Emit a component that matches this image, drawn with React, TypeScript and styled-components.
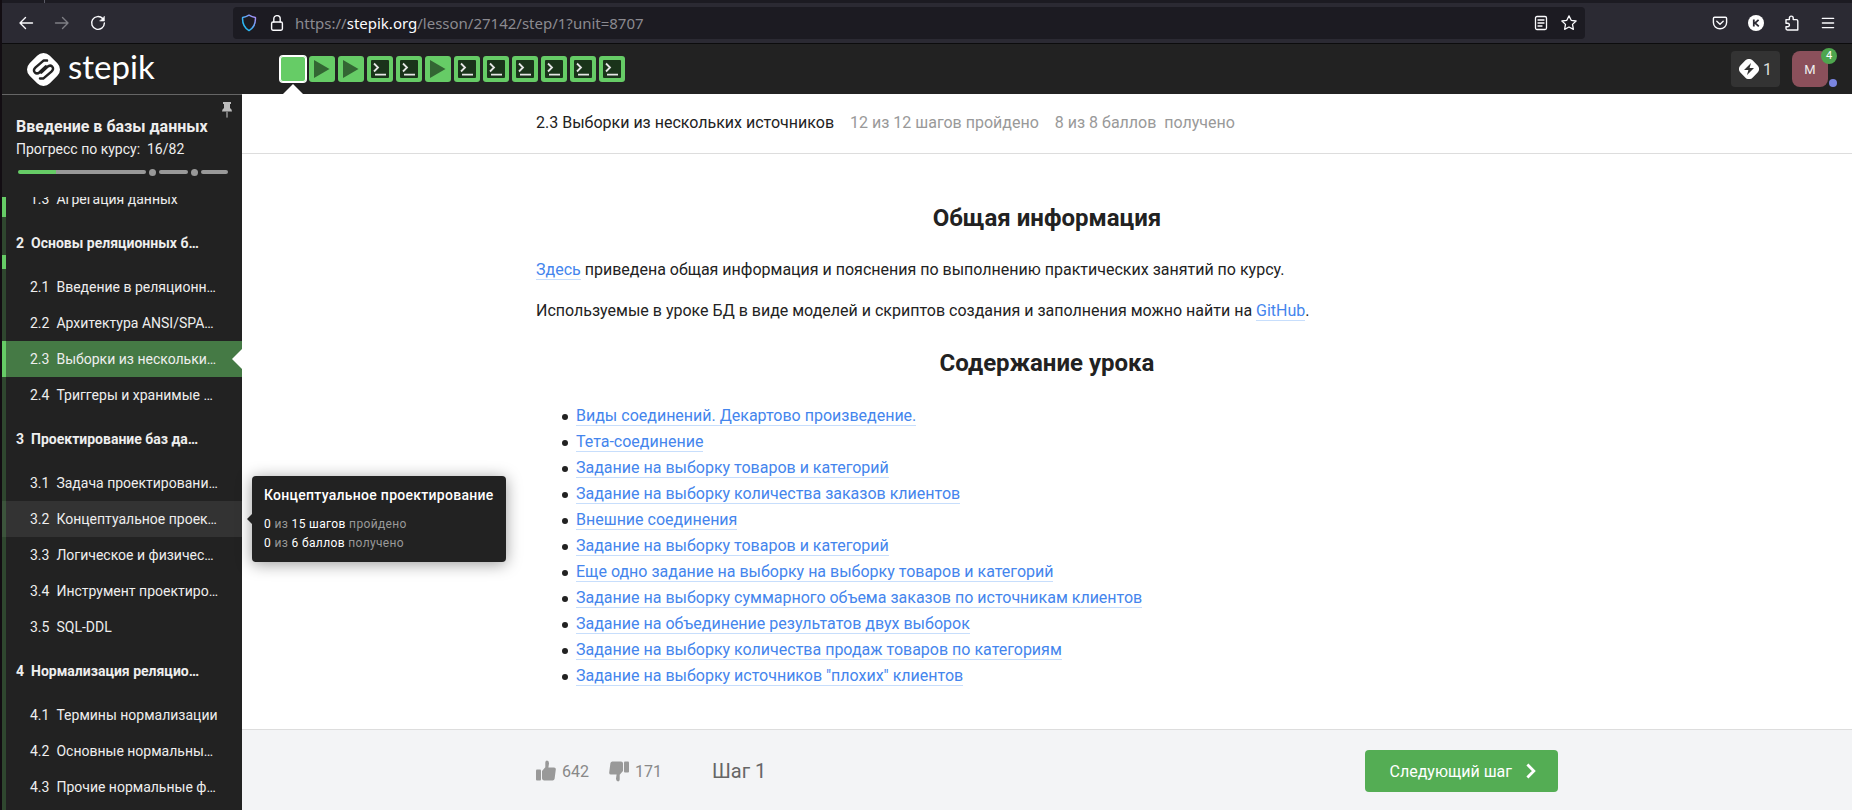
import React from 'react';
import styled, { createGlobalStyle, css } from 'styled-components';

const GlobalStyle = createGlobalStyle`
  *, *::before, *::after { box-sizing: border-box; }
  body { margin: 0; background: #fff; font-family: Roboto, "Noto Sans", sans-serif; color: #222; }
  button { font: inherit; border: 0; padding: 0; background: none; color: inherit; cursor: pointer; }
  a { text-decoration: none; color: inherit; }
  svg { display: block; flex: none; }
`;

/* ---------- browser window ---------- */

const Window = styled.div`
  display: flex;
  flex-direction: column;
  height: 100vh;
  overflow: hidden;
  border-left: 2px solid #120d12;
`;

const TabStrip = styled.div`
  flex: none;
  height: 3px;
  padding-left: 42px;
  background: #1c1b22;
  &::before { content: ''; display: block; width: 1px; height: 3px; background: #5b5b66; }
`;

const Toolbar = styled.div`
  flex: none;
  display: flex;
  align-items: center;
  height: 41px;
  padding: 0 14px 0 14px;
  background: #2b2a33;
  border-bottom: 1px solid #0c0c0d;
  color: #fbfbfe;
`;

const ToolbarGroup = styled.div<{ $end?: boolean }>`
  display: flex;
  gap: 16px;
  ${p => p.$end && css`margin-left: 125px;`}
`;

const IconButton = styled.button<{ $dim?: boolean }>`
  display: grid;
  place-items: center;
  width: 20px;
  height: 20px;
  opacity: ${p => (p.$dim ? 0.4 : 1)};
`;

const AddressBar = styled.div`
  flex: 1;
  display: flex;
  align-items: center;
  gap: 8px;
  height: 32px;
  margin-left: 125px;
  padding: 0 6px;
  border-radius: 4px;
  background: #1c1b22;
`;

const Address = styled.div`
  flex: 1;
  font: 15px/20px "Noto Sans", sans-serif;
  color: #8b8a90;
  b { font-weight: 400; color: #fbfbfe; }
`;

/* ---------- site header ---------- */

const Header = styled.header`
  flex: none;
  display: flex;
  align-items: center;
  height: 50px;
  padding: 0 24px 0 25px;
  background: #222;
`;

const Logo = styled.a`
  display: flex;
  align-items: center;
  gap: 8px;
  width: 253px;
  color: #fff;
  font: 33px/40px Lato, sans-serif;
  span { margin-top: -6px; }
`;

const Steps = styled.nav`
  display: flex;
  gap: 3px;
`;

const Step = styled.a<{ $active?: boolean }>`
  position: relative;
  display: grid;
  place-items: center;
  width: 26px;
  height: 26px;
  border-radius: 3px;
  background: #66cc66;
  ${p => p.$active && css`
    box-shadow: 0 0 0 1px #fff, inset 0 0 0 1px #fff;
    &::after {
      content: '';
      position: absolute;
      top: 28px;
      left: 3px;
      border: 10px solid transparent;
      border-top: 0;
      border-bottom-color: #fff;
    }
  `}
`;

const HeaderEnd = styled.div`
  display: flex;
  gap: 12px;
  margin-left: auto;
`;

const Knowledge = styled.button`
  display: flex;
  align-items: center;
  gap: 4px;
  height: 36px;
  padding: 0 8px;
  border-radius: 4px;
  background: #333;
  color: #ddd;
  font-size: 16px;
`;

const Avatar = styled.button`
  position: relative;
  width: 36px;
  height: 36px;
  border-radius: 8px;
  background: #8b505b;
  color: #eee;
  font-size: 13px;
`;

const Badge = styled.span`
  position: absolute;
  top: -3px;
  right: -9px;
  width: 16px;
  height: 16px;
  border-radius: 50%;
  background: #4ea64e;
  color: #fff;
  font-size: 11px;
  line-height: 16px;
`;

const Dot = styled.span`
  position: absolute;
  right: -9px;
  bottom: 0;
  width: 8px;
  height: 8px;
  border-radius: 50%;
  background: #7a85e0;
`;

/* ---------- sidebar ---------- */

const Body = styled.div`
  flex: 1;
  display: flex;
  min-height: 0;
`;

const Sidebar = styled.aside`
  position: relative;
  flex: none;
  display: flex;
  flex-direction: column;
  width: 240px;
  border-top: 1px solid #666;
  background: #222;
  color: #eee;
`;

const CourseInfo = styled.div`
  flex: none;
  height: 102px;
  padding: 21px 14px 0;
`;

const CourseTitle = styled.a`
  display: block;
  font-size: 16px;
  font-weight: 700;
  line-height: 22px;
  white-space: nowrap;
`;

const CourseProgress = styled.div`
  font-size: 14px;
  line-height: 22px;
  white-space: pre;
`;

const Pin = styled.button`
  position: absolute;
  top: 6px;
  right: 9px;
`;

const ProgressLine = styled.div`
  display: flex;
  align-items: center;
  gap: 3px;
  height: 8px;
  margin: 8px 0 0 2px;
`;

const Segment = styled.i<{ $length: number; $done?: number }>`
  flex: 0 0 ${p => p.$length}px;
  height: 4px;
  border-radius: 2px;
  background: linear-gradient(to right, #66cc66 ${p => p.$done || 0}px, #999 ${p => p.$done || 0}px);
`;

const Mark = styled.i`
  flex: none;
  width: 7px;
  height: 7px;
  border-radius: 50%;
  background: #999;
`;

const Outline = styled.nav`
  flex: 1;
  min-height: 0;
  overflow: hidden;
  background: linear-gradient(#2f472f, #2f472f) left / 4px 100% no-repeat;
`;

const OutlineList = styled.ul`
  list-style: none;
  margin: -16px 0 0;
  padding: 0;
`;

type RowState = 'done' | 'active' | 'hover' | 'tail' | undefined;

const strip = (state: RowState) =>
  state === 'done' || state === 'active'
    ? '#66cc66, #66cc66'
    : state === 'tail'
    ? '#2f472f 38px, #66cc66 38px'
    : state === 'hover'
    ? '#3c543c, #3c543c'
    : '#2f472f, #2f472f';

const Row = styled.a<{ $chapter?: boolean; $state?: RowState }>`
  position: relative;
  display: flex;
  align-items: center;
  gap: 7px;
  height: ${p => (p.$chapter ? 52 : 36)}px;
  padding-left: ${p => (p.$chapter ? 14 : 28)}px;
  font-size: 14px;
  font-weight: ${p => (p.$chapter ? 700 : 400)};
  white-space: nowrap;
  background: linear-gradient(${p => strip(p.$state)}) left / 4px 100% no-repeat
    ${p => (p.$state === 'active' ? '#457a45' : p.$state === 'hover' ? '#333' : '#222')};
  ${p => p.$state === 'active' && css`
    &::after {
      content: '';
      position: absolute;
      right: 0;
      top: 8px;
      border: 10px solid transparent;
      border-left: 0;
      border-right-color: #fff;
    }
  `}
`;

const Tooltip = styled.div`
  position: absolute;
  left: 250px;
  top: 381px;
  z-index: 2;
  padding: 10px 12px 9px;
  border-radius: 4px;
  background: #222;
  color: #fff;
  box-shadow: 0 2px 16px rgba(0, 0, 0, 0.4);
  font-size: 12px;
  line-height: 19px;
  letter-spacing: 0.03em;
  white-space: nowrap;
  &::before {
    content: '';
    position: absolute;
    left: -5px;
    top: 38px;
    border: 5px solid transparent;
    border-left: 0;
    border-right-color: #222;
  }
  span { color: #999; }
  p { margin: 0; }
`;

const TooltipTitle = styled.p`
  && { margin-bottom: 10px; }
  font-size: 14px;
  font-weight: 500;
  letter-spacing: 0.02em;
`;

/* ---------- lesson ---------- */

const Main = styled.main`
  flex: 1;
  display: flex;
  flex-direction: column;
  min-width: 0;
`;

const Column = styled.div`
  width: 100%;
  max-width: 1022px;
  margin: 0 auto;
`;

const LessonBar = styled.div`
  flex: none;
  height: 60px;
  border-bottom: 1px solid #ddd;
  font-size: 16px;
  line-height: 58px;
  ${Column} { display: flex; gap: 16px; }
`;

const Muted = styled.span`
  color: #999;
  white-space: pre;
`;

const Article = styled.article`
  flex: 1;
  min-height: 0;
  padding-top: 48px;
  font-size: 16px;
  line-height: 26px;
  h2 { margin: 0 0 23px; font-size: 24px; line-height: 32px; text-align: center; }
  p { margin: 0 0 15px; }
  p + h2 { margin-top: 23px; }
`;

const Contents = styled.ul`
  list-style: none;
  margin: 0;
  padding: 1px 0 0 26px;
  li::before {
    content: '';
    display: inline-block;
    width: 6px;
    height: 6px;
    margin-right: 8px;
    border-radius: 50%;
    background: #222;
    vertical-align: middle;
  }
`;

const TextLink = styled.a`
  color: #4485ed;
  border-bottom: 1px solid #c7defc;
`;

const Footer = styled.footer`
  flex: none;
  height: 81px;
  padding-top: 20px;
  border-top: 1px solid #ddd;
  background: #f3f4f6;
  ${Column} { display: flex; align-items: center; height: 42px; }
`;

const Vote = styled.button`
  display: flex;
  align-items: center;
  gap: 6px;
  margin-right: 20px;
  color: #888;
  font-size: 16px;
  svg { color: #999; }
`;

const StepName = styled.span`
  margin-left: 30px;
  color: #666;
  font-size: 20px;
`;

const NextButton = styled.button`
  display: flex;
  align-items: center;
  gap: 14px;
  height: 42px;
  margin-left: auto;
  padding: 0 22px 0 25px;
  border-radius: 4px;
  background: #54ad54;
  color: #fff;
  font-size: 16px;
`;

/* ---------- icons ---------- */

const Line: React.FC<{ size?: number; width?: number; children: React.ReactNode }> = ({ size = 16, width = 1.4, children }) => (
  <svg width={size} height={size} viewBox="0 0 16 16" fill="none" stroke="currentColor" strokeWidth={width} strokeLinecap="round" strokeLinejoin="round">
    {children}
  </svg>
);

const LogoMark = () => (
  <svg width="33" height="33" viewBox="0 0 33 33">
    <rect x="2.2" y="2.2" width="28.6" height="28.6" rx="9" fill="#fff" transform="rotate(45 16.5 16.5)" />
    <g fill="none" stroke="#222" strokeWidth="2.5" strokeLinecap="round" strokeLinejoin="round">
      <path d="M20 7.6 L16.8 7.4 L8.6 14.4 Q5.6 17.4 8 19.6 Q10 21.4 12.6 19.2 L18.8 13.4" />
      <path d="M13 25.4 L16.2 25.6 L24.4 18.6 Q27.4 15.6 25 13.4 Q23 11.6 20.4 13.8 L14.2 19.6" />
    </g>
  </svg>
);

const PlayIcon = () => (
  <svg width="26" height="26" viewBox="0 0 26 26"><path d="M5 4 L20.5 13 L5 22 Z" fill="#336633" /></svg>
);

const CodeIcon = () => (
  <svg width="26" height="26" viewBox="0 0 26 26" fill="none">
    <rect x="4" y="4" width="18" height="18" rx="1" fill="#1a331a" />
    <path d="M7 7.5 L11 11.5 L7 15.5 M8 18.6 H19" stroke="#e6e6e6" strokeWidth="1.8" />
  </svg>
);

const ThumbIcon: React.FC<{ down?: boolean }> = ({ down }) => (
  <svg width="20" height="22" viewBox="0 0 20 22" fill="currentColor">
    <g transform={down ? 'rotate(180 10 11)' : undefined}>
      <rect x="0" y="9.5" width="5" height="11" rx="1" />
      <path d="M6 11 L9.3 7.2 V2.6 Q9.4 .6 11 .6 Q13.2 .8 13 3.6 L12.4 7.4 H18 Q20 7.5 19.8 9.4 L18.6 18.8 Q18.3 20.5 16.6 20.5 H8 Q6 20.3 6 18.6 Z" />
    </g>
  </svg>
);

/* ---------- data ---------- */

const steps = ['text', 'play', 'play', 'code', 'code', 'play', 'code', 'code', 'code', 'code', 'code', 'code'];

const outline: { n: string; title: string; chapter?: boolean; state?: RowState }[] = [
  { n: '1.3', title: 'Агрегация данных', state: 'done' },
  { n: '2', title: 'Основы реляционных б…', chapter: true, state: 'tail' },
  { n: '2.1', title: 'Введение в реляционн…' },
  { n: '2.2', title: 'Архитектура ANSI/SPA…' },
  { n: '2.3', title: 'Выборки из нескольки…', state: 'active' },
  { n: '2.4', title: 'Триггеры и хранимые …' },
  { n: '3', title: 'Проектирование баз да…', chapter: true },
  { n: '3.1', title: 'Задача проектировани…' },
  { n: '3.2', title: 'Концептуальное проек…', state: 'hover' },
  { n: '3.3', title: 'Логическое и физичес…' },
  { n: '3.4', title: 'Инструмент проектиро…' },
  { n: '3.5', title: 'SQL-DDL' },
  { n: '4', title: 'Нормализация реляцио…', chapter: true },
  { n: '4.1', title: 'Термины нормализации' },
  { n: '4.2', title: 'Основные нормальны…' },
  { n: '4.3', title: 'Прочие нормальные ф…' },
];

const contents = [
  'Виды соединений. Декартово произведение.',
  'Тета-соединение',
  'Задание на выборку товаров и категорий',
  'Задание на выборку количества заказов клиентов',
  'Внешние соединения',
  'Задание на выборку товаров и категорий',
  'Еще одно задание на выборку на выборку товаров и категорий',
  'Задание на выборку суммарного объема заказов по источникам клиентов',
  'Задание на объединение результатов двух выборок',
  'Задание на выборку количества продаж товаров по категориям',
  'Задание на выборку источников "плохих" клиентов',
];

const BrowserToolbar = () => (
  <Toolbar>
    <ToolbarGroup>
      <IconButton aria-label="Назад"><Line><path d="M14.5 8 H2 M7.5 2.5 L2 8 L7.5 13.5" /></Line></IconButton>
      <IconButton aria-label="Вперёд" $dim><Line><path d="M1.5 8 H14 M8.5 2.5 L14 8 L8.5 13.5" /></Line></IconButton>
      <IconButton aria-label="Обновить">
        <Line><path d="M12.7 3.6 A6.4 6.4 0 1 0 14.4 8" /><path d="M14.4 1.6 V6 H10 Z" fill="currentColor" strokeWidth="0.6" /></Line>
      </IconButton>
    </ToolbarGroup>
    <AddressBar>
      <IconButton aria-label="Защита">
        <svg width="16" height="18" viewBox="0 0 16 18" fill="none">
          <defs><linearGradient id="shield" x1="0" y1="1" x2="1" y2="0"><stop offset="0.3" stopColor="#2bb8f5" /><stop offset="0.9" stopColor="#a48ff5" /></linearGradient></defs>
          <path d="M8 1.2 Q11 3 14.4 3.6 Q15 12.5 8 16.6 Q1 12.5 1.6 3.6 Q5 3 8 1.2 Z" stroke="url(#shield)" strokeWidth="1.5" strokeLinejoin="round" />
        </svg>
      </IconButton>
      <IconButton aria-label="Соединение">
        <Line><rect x="2.6" y="7" width="10.8" height="8.2" rx="1.4" /><path d="M4.8 7 V3.8 A3.2 3.2 0 0 1 11.2 3.8 V7" /></Line>
      </IconButton>
      <Address>https://<b>stepik.org</b>/lesson/27142/step/1?unit=8707</Address>
      <IconButton aria-label="Режим чтения">
        <Line width={1.3}><rect x="2.5" y="1.5" width="11" height="13" rx="1.5" /><path d="M5 5 H11 M5 8 H11 M5 11 H9" /></Line>
      </IconButton>
      <IconButton aria-label="Закладка">
        <Line width={1.3}><path d="M8 .9 L10.2 5.3 L15.1 6 L11.5 9.4 L12.4 14.3 L8 12 L3.6 14.3 L4.5 9.4 L.9 6 L5.8 5.3 Z" /></Line>
      </IconButton>
    </AddressBar>
    <ToolbarGroup $end>
      <IconButton aria-label="Pocket">
        <Line><path d="M2.6 2.2 H13.4 Q14.6 2.2 14.6 3.4 V7.4 A6.6 6.4 0 0 1 1.4 7.4 V3.4 Q1.4 2.2 2.6 2.2 Z M4.8 6.2 L8 9.2 L11.2 6.2" /></Line>
      </IconButton>
      <IconButton aria-label="Аккаунт">
        <svg width="16" height="16" viewBox="0 0 16 16"><circle cx="8" cy="8" r="8" fill="#fff" /><path d="M5.8 4.6 V11.4 M10.6 4.8 L7 8 L10.8 11.4" stroke="#2b2a33" strokeWidth="1.8" fill="none" /></svg>
      </IconButton>
      <IconButton aria-label="Расширения">
        <Line><path d="M5.4 4.6 V3 A1.9 1.9 0 0 1 9.2 3 V4.6 H12.4 Q13.8 4.6 13.8 6 V15 H3.4 Q2 15 2 13.6 V11.8 H3.6 A1.7 1.7 0 0 0 3.6 8.2 H2 V4.6 Z" /></Line>
      </IconButton>
      <IconButton aria-label="Меню"><Line><path d="M2.4 3.4 H13.6 M2.4 8 H13.6 M2.4 12.6 H13.6" /></Line></IconButton>
    </ToolbarGroup>
  </Toolbar>
);

export default function App() {
  return (
    <Window>
      <GlobalStyle />
      <TabStrip />
      <BrowserToolbar />
      <Header>
        <Logo href="#"><LogoMark /><span>stepik</span></Logo>
        <Steps>
          {steps.map((kind, i) => (
            <Step key={i} href="#" $active={i === 0} aria-label={`Шаг ${i + 1}`}>
              {kind === 'play' && <PlayIcon />}
              {kind === 'code' && <CodeIcon />}
            </Step>
          ))}
        </Steps>
        <HeaderEnd>
          <Knowledge>
            <svg width="20" height="20" viewBox="0 0 20 20">
              <rect x="1.4" y="1.4" width="17.2" height="17.2" rx="5" fill="#fff" transform="rotate(45 10 10)" />
              <path d="M12 4 L5 11 H9.4 L8 16 L15 9 H10.6 Z" fill="#333" />
            </svg>
            1
          </Knowledge>
          <Avatar>M<Badge>4</Badge><Dot /></Avatar>
        </HeaderEnd>
      </Header>
      <Body>
        <Sidebar>
          <CourseInfo>
            <CourseTitle href="#">Введение в базы данных</CourseTitle>
            <CourseProgress>Прогресс по курсу:  16/82</CourseProgress>
            <ProgressLine>
              <Segment $length={128} $done={38} /><Mark /><Segment $length={29} /><Mark /><Segment $length={27} />
            </ProgressLine>
          </CourseInfo>
          <Pin aria-label="Закрепить">
            <svg width="12" height="18" viewBox="0 0 12 18" fill="#bbb">
              <path d="M2 1 H10 V3 H9 V7 Q11 8 11 10.6 H1 Q1 8 3 7 V3 H2 Z" /><rect x="5.3" y="10.6" width="1.4" height="6" fill="#999" />
            </svg>
          </Pin>
          <Outline>
            <OutlineList>
              {outline.map(r => (
                <li key={r.n}>
                  <Row href="#" $chapter={r.chapter} $state={r.state}><span>{r.n}</span><span>{r.title}</span></Row>
                </li>
              ))}
            </OutlineList>
          </Outline>
          <Tooltip role="tooltip">
            <TooltipTitle>Концептуальное проектирование</TooltipTitle>
            <p>0 <span>из</span> 15 шагов <span>пройдено</span></p>
            <p>0 <span>из</span> 6 баллов <span>получено</span></p>
          </Tooltip>
        </Sidebar>
        <Main>
          <LessonBar>
            <Column>
              <span>2.3 Выборки из нескольких источников</span>
              <Muted>12 из 12 шагов пройдено</Muted>
              <Muted>8 из 8 баллов  получено</Muted>
            </Column>
          </LessonBar>
          <Article>
            <Column>
              <h2>Общая информация</h2>
              <p><TextLink href="#">Здесь</TextLink> приведена общая информация и пояснения по выполнению практических занятий по курсу.</p>
              <p>Используемые в уроке БД в виде моделей и скриптов создания и заполнения можно найти на <TextLink href="#">GitHub</TextLink>.</p>
              <h2>Содержание урока</h2>
              <Contents>
                {contents.map((text, i) => <li key={i}><TextLink href="#">{text}</TextLink></li>)}
              </Contents>
            </Column>
          </Article>
          <Footer>
            <Column>
              <Vote aria-label="Нравится"><ThumbIcon />642</Vote>
              <Vote aria-label="Не нравится"><ThumbIcon down />171</Vote>
              <StepName>Шаг 1</StepName>
              <NextButton>
                Следующий шаг
                <svg width="10" height="16" viewBox="0 0 10 16" fill="none" stroke="#fff" strokeWidth="2.8"><path d="M1.4 1.6 L7.8 8 L1.4 14.4" /></svg>
              </NextButton>
            </Column>
          </Footer>
        </Main>
      </Body>
    </Window>
  );
}
